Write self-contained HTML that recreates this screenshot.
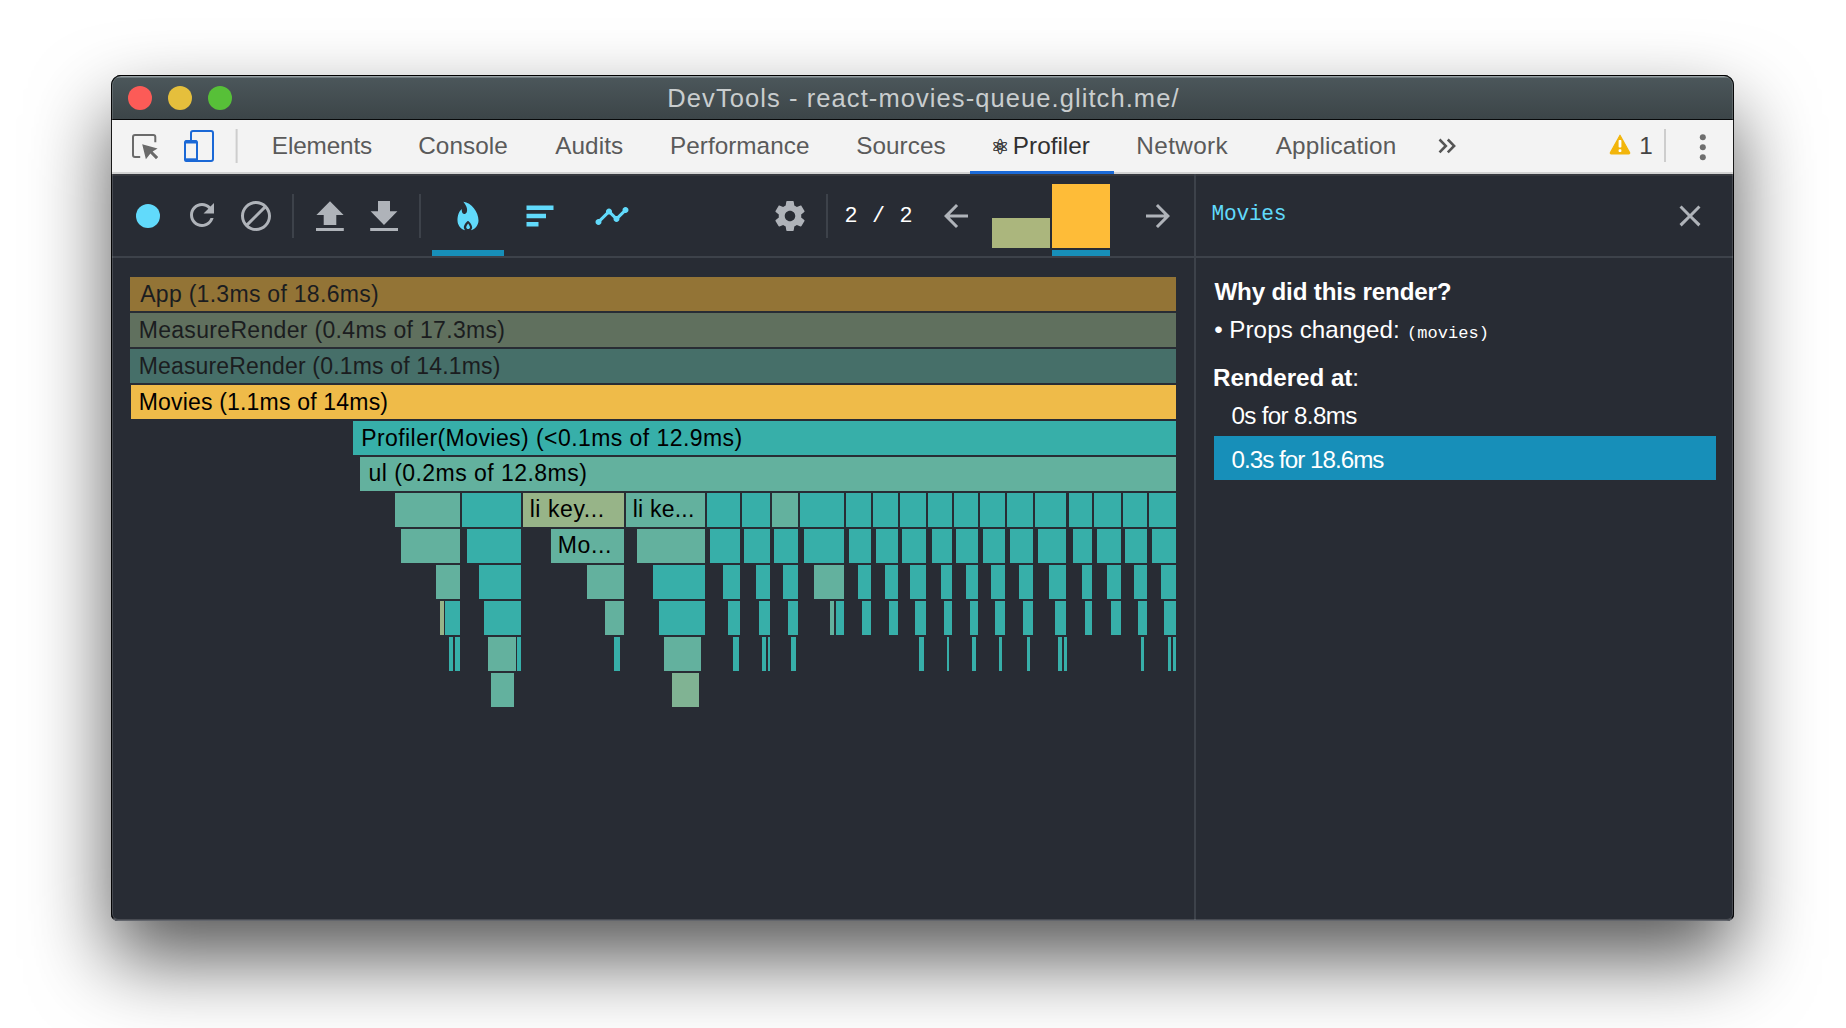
<!DOCTYPE html>
<html lang="en">
<head>
<meta charset="utf-8">
<title>DevTools - react-movies-queue.glitch.me/</title>
<style>
html,body{margin:0;padding:0;}
body{width:1846px;height:1028px;overflow:hidden;background:#fff;position:relative;font-family:"Liberation Sans",sans-serif;}
.abs{position:absolute;}
#win{position:absolute;left:111px;top:75px;width:1623px;height:846px;background:#282c34;border-radius:10px 10px 7px 7px;
 box-shadow:0 38px 80px 0 rgba(0,0,0,.66);}
#winclip{position:absolute;left:111px;top:75px;width:1623px;height:846px;border-radius:10px 10px 7px 7px;overflow:hidden;}
#title{position:absolute;left:0;top:0;width:1623px;height:44px;background:linear-gradient(#000 0,#000 1px,#919b9e 1px,#6d787c 2.6px,#4b565a 3.2px,#3c4548 44px);border-bottom:1px solid #07090a;}
.tl{position:absolute;top:10.8px;width:24.6px;height:24.6px;border-radius:50%;}
#tabs{position:absolute;left:0;top:45px;width:1623px;height:52px;background:#f3f3f3;border-bottom:2px solid #d2d2d2;}
#dark{position:absolute;left:0;top:99px;width:1623px;height:747px;background:#282c34;}
.vsep{position:absolute;width:2px;background:#3d424a;}
.fb{position:absolute;height:34px;}
.ic{position:absolute;width:36px;height:36px;fill:#afb3b9;}
.ic.on{fill:#61dafb;}
.mono{font-family:"Liberation Mono",monospace;}
.tx{position:absolute;white-space:pre;line-height:30px;}
.s{font-family:"Liberation Sans",sans-serif;}
.dj{font-family:"DejaVu Sans",sans-serif;}
</style>
</head>
<body>
<div id="win"></div>
<div id="winclip">
  <div id="title">
    <div class="tl" style="left:16.7px;background:#fc5b57;"></div>
    <div class="tl" style="left:56.7px;background:#e5bf3c;"></div>
    <div class="tl" style="left:96.6px;background:#57c038;"></div>
    
  </div>
  <div id="tabs">
    
    <svg class="abs" style="left:9px;top:4px;width:120px;height:44px;" viewBox="120 124 120 44">
      <path d="M155.3 142.3V137a2 2 0 0 0-2-2H135a2 2 0 0 0-2 2v18a2 2 0 0 0 2 2h5.2" fill="none" stroke="#6a6a6a" stroke-width="2"/>
      <path d="M142.2 144.2L157.6 148.6 152.6 151.4 158.2 157 156 159.2 150.4 153.6 145.9 159.2z" fill="#6a6a6a"/>
      <rect x="191" y="131" width="22" height="30" rx="2" fill="none" stroke="#1a68d6" stroke-width="2"/>
      <rect x="185" y="141" width="12" height="20" rx="1.5" fill="#f3f3f3" stroke="#1a68d6" stroke-width="2"/>
      <rect x="185" y="140.5" width="12" height="3" fill="#1a68d6"/>
      <rect x="185" y="158.3" width="12" height="3" fill="#1a68d6"/>
      <rect x="235.6" y="129" width="2" height="34" fill="#cdcdcd"/>
    </svg>
    <svg class="abs" style="left:1319px;top:10px;width:30px;height:30px;" viewBox="1430 130 30 30"><path d="M1439.5 139.5l6.3 6.4-6.3 6.4M1447.8 139.5l6.3 6.4-6.3 6.4" fill="none" stroke="#555" stroke-width="2.6"/></svg>
    <svg class="abs" style="left:1494px;top:10px;width:30px;height:30px;" viewBox="1605 130 30 30"><path d="M1620 135.2l9.6 17.3a1 1 0 0 1-.9 1.5h-17.4a1 1 0 0 1-.9-1.5z" fill="#f2b50b" stroke="#f2b50b" stroke-width="1.2" stroke-linejoin="round"/><rect x="1618.6" y="140" width="2.8" height="7.6" rx=".8" fill="#fff"/><rect x="1618.6" y="149.2" width="2.8" height="2.8" rx=".8" fill="#fff"/></svg>
    <div class="abs" style="left:1553px;top:9px;width:2px;height:33px;background:#cdcdcd;"></div>
    <svg class="abs" style="left:1582px;top:10px;width:20px;height:34px;" viewBox="1693 130 20 34"><circle cx="1702.8" cy="137.2" r="3" fill="#6e6e6e"/><circle cx="1702.8" cy="147.2" r="3" fill="#6e6e6e"/><circle cx="1702.8" cy="157.2" r="3" fill="#6e6e6e"/></svg>
    <div class="abs" style="left:858.5px;top:51px;width:144.5px;height:3px;background:#1b6ad8;"></div>
  </div>
  <div id="dark">
    <div class="abs" style="left:0;top:0;width:1623px;height:2px;background:#36383e;"></div>
    <div class="abs" style="left:0;top:82px;width:1623px;height:2px;background:#3d424a;"></div>
    <div class="vsep" style="left:1083px;top:0;height:747px;"></div>
    <div class="vsep" style="left:181px;top:20px;height:44px;"></div>
    <div class="vsep" style="left:308px;top:20px;height:44px;"></div>
    <div class="vsep" style="left:715px;top:20px;height:44px;"></div>
    <div class="abs" style="left:321px;top:76px;width:72px;height:6px;background:#178fb9;"></div>
    
    <div class="abs" style="left:25px;top:30px;width:24px;height:24px;border-radius:50%;background:#61dafb;"></div>
    <svg class="ic" style="left:73px;top:23px;" viewBox="0 0 24 24"><path d="M17.65 6.35C16.2 4.9 14.21 4 12 4c-4.42 0-7.99 3.58-7.99 8s3.57 8 7.99 8c3.73 0 6.84-2.55 7.73-6h-2.08c-.82 2.33-3.04 4-5.65 4-3.31 0-6-2.69-6-6s2.69-6 6-6c1.66 0 3.14.69 4.22 1.78L13 11h7V4l-2.35 2.35z"/></svg>
    <svg class="ic" style="left:127px;top:24px;" viewBox="0 0 24 24"><path d="M12 2C6.5 2 2 6.5 2 12s4.5 10 10 10 10-4.5 10-10S17.5 2 12 2zM4 12c0-4.4 3.6-8 8-8 1.8 0 3.5.6 4.9 1.7L5.7 16.9C4.6 15.5 4 13.8 4 12zm8 8c-1.8 0-3.5-.6-4.9-1.7L18.3 7.1C19.4 8.5 20 10.2 20 12c0 4.4-3.6 8-8 8z"/></svg>
    <svg class="abs" style="left:200px;top:22px;width:100px;height:40px;fill:#afb3b9;" viewBox="311 196 100 40"><path d="M330 201.2L343.6 215H336.3V225H323.7V215H316.4zM316 228h27.8v3H316z"/><path d="M378 201h12v10.2h7.4L384 225 370.6 211.2H378zM370.2 228H398v3H370.2z"/></svg>
    <svg class="ic on" style="left:339px;top:24px;" viewBox="0 0 24 24"><path fill-rule="evenodd" d="M10.0650893,21.5040462 C7.14020814,20.6850349 5,18.0558698 5,14.9390244 C5,14.017627 5,9.81707317 7.83333333,7.37804878 C7.83333333,7.37804878 7.58333333,11.199187 10,10.6300813 C11.125,10.326087 13.0062497,7.63043487 8.91666667,2.5 C14.1666667,3.06910569 19,9.32926829 19,14.9390244 C19,18.0558698 16.8597919,20.6850349 13.9349107,21.5040462 C14.454014,21.0118505 14.7765152,20.3233394 14.7765152,19.5613412 C14.7765152,17.2826087 12,15.0875871 12,15.0875871 C12,15.0875871 9.22348485,17.2826087 9.22348485,19.5613412 C9.22348485,20.3233394 9.54598603,21.0118505 10.0650893,21.5040462 Z M12.0833333,20.6514763 C11.3814715,20.6514763 10.8125,20.1226027 10.8125,19.4702042 C10.8125,18.6069669 12.0833333,16.9347829 12.0833333,16.9347829 C12.0833333,16.9347829 13.3541667,18.6069669 13.3541667,19.4702042 C13.3541667,20.1226027 12.7853285,20.6514763 12.0833333,20.6514763 Z"/></svg>
    <svg class="ic on" style="left:410.5px;top:24px;" viewBox="0 0 24 24"><path d="M3 5h18v3H3zM3 10.5h13v3H3zM3 16h8v3H3z"/></svg>
    <svg class="ic on" style="left:482.5px;top:23.5px;" viewBox="0 0 24 24"><path d="M23 8c0 1.1-.9 2-2 2-.18 0-.35-.02-.51-.07l-3.56 3.55c.05.16.07.34.07.52 0 1.1-.9 2-2 2s-2-.9-2-2c0-.18.02-.36.07-.52l-2.55-2.55c-.16.05-.34.07-.52.07s-.36-.02-.52-.07l-4.55 4.56c.05.16.07.33.07.51 0 1.1-.9 2-2 2s-2-.9-2-2 .9-2 2-2c.18 0 .35.02.51.07l4.56-4.55C8.02 9.36 8 9.18 8 9c0-1.1.9-2 2-2s2 .9 2 2c0 .18-.02.36-.07.52l2.55 2.55c.16-.05.34-.07.52-.07s.36.02.52.07l3.55-3.56C19.02 8.35 19 8.18 19 8c0-1.1.9-2 2-2s2 .9 2 2z"/></svg>
    <svg class="ic" style="left:661px;top:24px;" viewBox="0 0 24 24"><path d="M19.43 12.98c.04-.32.07-.64.07-.98s-.03-.66-.07-.98l2.11-1.65c.19-.15.24-.42.12-.64l-2-3.46c-.12-.22-.39-.3-.61-.22l-2.49 1c-.52-.4-1.08-.73-1.69-.98l-.38-2.65C14.46 2.18 14.25 2 14 2h-4c-.25 0-.46.18-.49.42l-.38 2.65c-.61.25-1.17.59-1.69.98l-2.49-1c-.23-.09-.49 0-.61.22l-2 3.46c-.13.22-.07.49.12.64l2.11 1.65c-.04.32-.07.65-.07.98s.03.66.07.98l-2.11 1.65c-.19.15-.24.42-.12.64l2 3.46c.12.22.39.3.61.22l2.49-1c.52.4 1.08.73 1.69.98l.38 2.65c.03.24.24.42.49.42h4c.25 0 .46-.18.49-.42l.38-2.65c.61-.25 1.17-.59 1.69-.98l2.49 1c.23.09.49 0 .61-.22l2-3.46c.12-.22.07-.49-.12-.64l-2.11-1.65zM12 15.5c-1.93 0-3.5-1.57-3.5-3.5s1.57-3.5 3.5-3.5 3.5 1.57 3.5 3.5-1.57 3.5-3.5 3.5z"/></svg>
    <svg class="ic" style="left:827px;top:24px;" viewBox="0 0 24 24"><path d="M20 11H7.83l5.59-5.59L12 4l-8 8 8 8 1.41-1.41L7.83 13H20v-2z"/></svg>
    <svg class="ic" style="left:1028.5px;top:24px;" viewBox="0 0 24 24"><path d="M12 4l-1.41 1.41L16.17 11H4v2h12.17l-5.58 5.59L12 20l8-8z"/></svg>
    <svg class="ic" style="left:1561px;top:24px;" viewBox="0 0 24 24"><path d="M19 6.41L17.59 5 12 10.59 6.41 5 5 6.41 10.59 12 5 17.41 6.41 19 12 13.41 17.59 19 19 17.41 13.41 12z"/></svg>
    <div class="abs" style="left:881px;top:44px;width:58px;height:30px;background:#abb67d;"></div>
    <div class="abs" style="left:941px;top:10px;width:58px;height:64px;background:#febc38;"></div>
    <div class="abs" style="left:941px;top:76px;width:58px;height:6px;background:#178fb9;"></div>
  </div>
</div>
<div class="abs" style="left:111px;top:75px;width:1623px;height:846px;border-radius:10px 10px 7px 7px;box-sizing:border-box;border:1px solid rgba(0,0,0,.9);border-bottom-color:#62656c;box-shadow:inset 0 0 0 1px rgba(255,255,255,.15);pointer-events:none;"></div>
<div id="flame" class="abs" style="left:0;top:0;">
<div class="fb" style="left:130px;top:277px;width:1045.5px;background:#febc38;opacity:.5;"></div>
<div class="fb" style="left:130px;top:313px;width:1045.5px;background:#97b488;opacity:.5;"></div>
<div class="fb" style="left:130px;top:349px;width:1045.5px;background:#63b19e;opacity:.5;"></div>
<div class="fb" style="left:131px;top:385px;width:1044.5px;background:#efbb49;"></div>
<div class="fb" style="left:353px;top:421px;width:822.5px;background:#37afa9;"></div>
<div class="fb" style="left:360px;top:457px;width:815.5px;background:#63b19e;"></div>
<div class="fb" style="left:395px;top:493px;width:65px;background:#63b19e;"></div>
<div class="fb" style="left:462px;top:493px;width:59px;background:#37afa9;"></div>
<div class="fb" style="left:523px;top:493px;width:101px;background:#97b488;"></div>
<div class="fb" style="left:626px;top:493px;width:79px;background:#63b19e;"></div>
<div class="fb" style="left:707px;top:493px;width:33px;background:#37afa9;"></div>
<div class="fb" style="left:742px;top:493px;width:28px;background:#37afa9;"></div>
<div class="fb" style="left:772px;top:493px;width:26px;background:#63b19e;"></div>
<div class="fb" style="left:800px;top:493px;width:44px;background:#37afa9;"></div>
<div class="fb" style="left:846px;top:493px;width:25px;background:#37afa9;"></div>
<div class="fb" style="left:873px;top:493px;width:24.5px;background:#37afa9;"></div>
<div class="fb" style="left:899.5px;top:493px;width:26.5px;background:#37afa9;"></div>
<div class="fb" style="left:928px;top:493px;width:24px;background:#37afa9;"></div>
<div class="fb" style="left:954px;top:493px;width:24px;background:#37afa9;"></div>
<div class="fb" style="left:980px;top:493px;width:24.5px;background:#37afa9;"></div>
<div class="fb" style="left:1006.5px;top:493px;width:26.0px;background:#37afa9;"></div>
<div class="fb" style="left:1034.5px;top:493px;width:31.5px;background:#37afa9;"></div>
<div class="fb" style="left:1068.5px;top:493px;width:23.5px;background:#37afa9;"></div>
<div class="fb" style="left:1094px;top:493px;width:26.5px;background:#37afa9;"></div>
<div class="fb" style="left:1122.5px;top:493px;width:24.5px;background:#37afa9;"></div>
<div class="fb" style="left:1149px;top:493px;width:26.5px;background:#37afa9;"></div>
<div class="fb" style="left:401px;top:529px;width:59px;background:#63b19e;"></div>
<div class="fb" style="left:467px;top:529px;width:54px;background:#37afa9;"></div>
<div class="fb" style="left:550.5px;top:529px;width:73.5px;background:#63b19e;"></div>
<div class="fb" style="left:637px;top:529px;width:68px;background:#63b19e;"></div>
<div class="fb" style="left:709.5px;top:529px;width:30.5px;background:#37afa9;"></div>
<div class="fb" style="left:744px;top:529px;width:26px;background:#37afa9;"></div>
<div class="fb" style="left:774px;top:529px;width:24px;background:#37afa9;"></div>
<div class="fb" style="left:804px;top:529px;width:40px;background:#37afa9;"></div>
<div class="fb" style="left:849px;top:529px;width:22px;background:#37afa9;"></div>
<div class="fb" style="left:875.5px;top:529px;width:22.0px;background:#37afa9;"></div>
<div class="fb" style="left:901.5px;top:529px;width:24.5px;background:#37afa9;"></div>
<div class="fb" style="left:931.5px;top:529px;width:20.5px;background:#37afa9;"></div>
<div class="fb" style="left:956px;top:529px;width:22px;background:#37afa9;"></div>
<div class="fb" style="left:983px;top:529px;width:21.5px;background:#37afa9;"></div>
<div class="fb" style="left:1009.5px;top:529px;width:23.0px;background:#37afa9;"></div>
<div class="fb" style="left:1037.5px;top:529px;width:28.5px;background:#37afa9;"></div>
<div class="fb" style="left:1072.5px;top:529px;width:19.5px;background:#37afa9;"></div>
<div class="fb" style="left:1097px;top:529px;width:23.5px;background:#37afa9;"></div>
<div class="fb" style="left:1124.5px;top:529px;width:22.5px;background:#37afa9;"></div>
<div class="fb" style="left:1151.5px;top:529px;width:24.0px;background:#37afa9;"></div>
<div class="fb" style="left:436px;top:565px;width:24px;background:#63b19e;"></div>
<div class="fb" style="left:479px;top:565px;width:42px;background:#37afa9;"></div>
<div class="fb" style="left:587px;top:565px;width:37px;background:#63b19e;"></div>
<div class="fb" style="left:653px;top:565px;width:52px;background:#37afa9;"></div>
<div class="fb" style="left:723px;top:565px;width:17px;background:#37afa9;"></div>
<div class="fb" style="left:755.5px;top:565px;width:14.5px;background:#37afa9;"></div>
<div class="fb" style="left:783px;top:565px;width:15px;background:#37afa9;"></div>
<div class="fb" style="left:814px;top:565px;width:30px;background:#63b19e;"></div>
<div class="fb" style="left:858px;top:565px;width:13px;background:#37afa9;"></div>
<div class="fb" style="left:885px;top:565px;width:12.5px;background:#37afa9;"></div>
<div class="fb" style="left:909.5px;top:565px;width:16.5px;background:#37afa9;"></div>
<div class="fb" style="left:940.5px;top:565px;width:11.5px;background:#37afa9;"></div>
<div class="fb" style="left:965.5px;top:565px;width:12.5px;background:#37afa9;"></div>
<div class="fb" style="left:991px;top:565px;width:13.5px;background:#37afa9;"></div>
<div class="fb" style="left:1019px;top:565px;width:13.5px;background:#37afa9;"></div>
<div class="fb" style="left:1049px;top:565px;width:17px;background:#37afa9;"></div>
<div class="fb" style="left:1081.5px;top:565px;width:10.5px;background:#37afa9;"></div>
<div class="fb" style="left:1106.5px;top:565px;width:14.0px;background:#37afa9;"></div>
<div class="fb" style="left:1134px;top:565px;width:13px;background:#37afa9;"></div>
<div class="fb" style="left:1161px;top:565px;width:14.5px;background:#37afa9;"></div>
<div class="fb" style="left:440px;top:601px;width:3.5px;background:#97b488;"></div>
<div class="fb" style="left:445px;top:601px;width:15px;background:#37afa9;"></div>
<div class="fb" style="left:484px;top:601px;width:37px;background:#37afa9;"></div>
<div class="fb" style="left:605px;top:601px;width:19px;background:#63b19e;"></div>
<div class="fb" style="left:659px;top:601px;width:46px;background:#37afa9;"></div>
<div class="fb" style="left:728px;top:601px;width:12px;background:#37afa9;"></div>
<div class="fb" style="left:759px;top:601px;width:11px;background:#37afa9;"></div>
<div class="fb" style="left:788px;top:601px;width:10px;background:#37afa9;"></div>
<div class="fb" style="left:829.5px;top:601px;width:4.5px;background:#63b19e;"></div>
<div class="fb" style="left:835.5px;top:601px;width:8.5px;background:#37afa9;"></div>
<div class="fb" style="left:862px;top:601px;width:9px;background:#37afa9;"></div>
<div class="fb" style="left:888.5px;top:601px;width:9.0px;background:#37afa9;"></div>
<div class="fb" style="left:914.5px;top:601px;width:11.5px;background:#37afa9;"></div>
<div class="fb" style="left:944px;top:601px;width:8px;background:#37afa9;"></div>
<div class="fb" style="left:969.5px;top:601px;width:8.5px;background:#37afa9;"></div>
<div class="fb" style="left:995px;top:601px;width:9.5px;background:#37afa9;"></div>
<div class="fb" style="left:1023px;top:601px;width:9.5px;background:#37afa9;"></div>
<div class="fb" style="left:1055px;top:601px;width:11px;background:#37afa9;"></div>
<div class="fb" style="left:1084.5px;top:601px;width:7.5px;background:#37afa9;"></div>
<div class="fb" style="left:1111px;top:601px;width:9.5px;background:#37afa9;"></div>
<div class="fb" style="left:1138px;top:601px;width:9px;background:#37afa9;"></div>
<div class="fb" style="left:1164px;top:601px;width:11.5px;background:#37afa9;"></div>
<div class="fb" style="left:449px;top:637px;width:3.5px;background:#37afa9;"></div>
<div class="fb" style="left:454.5px;top:637px;width:5.5px;background:#37afa9;"></div>
<div class="fb" style="left:488px;top:637px;width:27.5px;background:#63b19e;"></div>
<div class="fb" style="left:517px;top:637px;width:4px;background:#37afa9;"></div>
<div class="fb" style="left:614px;top:637px;width:6px;background:#37afa9;"></div>
<div class="fb" style="left:664px;top:637px;width:37px;background:#63b19e;"></div>
<div class="fb" style="left:733px;top:637px;width:5.5px;background:#37afa9;"></div>
<div class="fb" style="left:762px;top:637px;width:4px;background:#37afa9;"></div>
<div class="fb" style="left:767.5px;top:637px;width:2.5px;background:#37afa9;"></div>
<div class="fb" style="left:791px;top:637px;width:4.5px;background:#37afa9;"></div>
<div class="fb" style="left:919px;top:637px;width:4.5px;background:#37afa9;"></div>
<div class="fb" style="left:946.5px;top:637px;width:2.5px;background:#37afa9;"></div>
<div class="fb" style="left:971.5px;top:637px;width:4.0px;background:#37afa9;"></div>
<div class="fb" style="left:998.5px;top:637px;width:3.5px;background:#37afa9;"></div>
<div class="fb" style="left:1027px;top:637px;width:3px;background:#37afa9;"></div>
<div class="fb" style="left:1058px;top:637px;width:4px;background:#37afa9;"></div>
<div class="fb" style="left:1064px;top:637px;width:2.5px;background:#37afa9;"></div>
<div class="fb" style="left:1141px;top:637px;width:3px;background:#37afa9;"></div>
<div class="fb" style="left:1167.5px;top:637px;width:3.5px;background:#37afa9;"></div>
<div class="fb" style="left:1173px;top:637px;width:2.5px;background:#37afa9;"></div>
<div class="fb" style="left:491px;top:673px;width:22.5px;background:#63b19e;"></div>
<div class="fb" style="left:672px;top:673px;width:27px;background:#80b393;"></div>
</div>
<div id="side" class="abs" style="left:0;top:0;">
  <div class="abs" style="left:1214px;top:436px;width:502px;height:44px;background:#178fb9;"></div>
</div>
<div id="texts" class="abs" style="left:0;top:0;">
<div class="tx s" style="left:667.31px;top:83.3px;font-size:25.5px;letter-spacing:1.08px;color:#c9cdce;">DevTools - react-movies-queue.glitch.me/</div>
<div class="tx s" style="left:271.87px;top:130.6px;font-size:24.3px;letter-spacing:-0.131px;color:#5a5a5a;">Elements</div>
<div class="tx s" style="left:418.18px;top:130.6px;font-size:24.3px;letter-spacing:0.087px;color:#5a5a5a;">Console</div>
<div class="tx s" style="left:555.18px;top:130.6px;font-size:24.3px;letter-spacing:0.107px;color:#5a5a5a;">Audits</div>
<div class="tx s" style="left:669.97px;top:130.6px;font-size:24.3px;letter-spacing:0.034px;color:#5a5a5a;">Performance</div>
<div class="tx s" style="left:856.19px;top:130.6px;font-size:24.3px;letter-spacing:0.046px;color:#5a5a5a;">Sources</div>
<div class="tx s" style="left:1136.37px;top:130.6px;font-size:24.3px;letter-spacing:0.369px;color:#5a5a5a;">Network</div>
<div class="tx s" style="left:1275.68px;top:130.6px;font-size:24.3px;letter-spacing:0.17px;color:#5a5a5a;">Application</div>
<div class="tx s" style="left:1012.87px;top:130.6px;font-size:24.3px;letter-spacing:0.002px;color:#303030;">Profiler</div>
<div class="tx s" style="left:1639.2px;top:130.9px;font-size:24.3px;letter-spacing:0px;color:#444;">1</div>
<div class="tx dj" style="left:990.98px;top:131.7px;font-size:20.5px;letter-spacing:0px;color:#3a3a3a;-webkit-text-stroke:0.5px #3a3a3a;">&#9883;</div>
<div class="tx s" style="left:140.18px;top:279.11px;font-size:23px;letter-spacing:0.289px;color:#1b1d20;">App (1.3ms of 18.6ms)</div>
<div class="tx s" style="left:138.67px;top:315.11px;font-size:23px;letter-spacing:0.323px;color:#1b1d20;">MeasureRender (0.4ms of 17.3ms)</div>
<div class="tx s" style="left:138.67px;top:351.11px;font-size:23px;letter-spacing:0.17px;color:#1b1d20;">MeasureRender (0.1ms of 14.1ms)</div>
<div class="tx s" style="left:138.67px;top:386.61px;font-size:23px;letter-spacing:0.187px;color:#000;">Movies (1.1ms of 14ms)</div>
<div class="tx s" style="left:361.17px;top:422.61px;font-size:23px;letter-spacing:0.435px;color:#000;">Profiler(Movies) (&lt;0.1ms of 12.9ms)</div>
<div class="tx s" style="left:368.47px;top:458.41px;font-size:23px;letter-spacing:0.458px;color:#000;">ul (0.2ms of 12.8ms)</div>
<div class="tx s" style="left:529.67px;top:494.31px;font-size:23px;letter-spacing:0.564px;color:#000;">li key...</div>
<div class="tx s" style="left:632.67px;top:494.31px;font-size:23px;letter-spacing:0.234px;color:#000;">li ke...</div>
<div class="tx s" style="left:557.67px;top:530.21px;font-size:23px;letter-spacing:0.661px;color:#000;">Mo...</div>
<div class="tx mono" style="left:844.53px;top:202.21px;font-size:21.8px;letter-spacing:0.665px;color:#fff;">2 / 2</div>
<div class="tx mono" style="left:1211.52px;top:199.02px;font-size:21.2px;letter-spacing:-0.256px;color:#61dafb;">Movies</div>
<div class="tx s" style="left:1214.45px;top:277px;font-size:24.2px;font-weight:bold;letter-spacing:-0.178px;color:#fff;">Why did this render?</div>
<div class="tx s" style="left:1214.17px;top:314.6px;font-size:24.2px;letter-spacing:0px;color:#fff;">&bull;</div>
<div class="tx s" style="left:1229.28px;top:314.6px;font-size:24.2px;letter-spacing:0.081px;color:#fff;">Props changed:</div>
<div class="tx mono" style="left:1407.07px;top:318.71px;font-size:17px;letter-spacing:0.028px;color:#fff;">(movies)</div>
<div class="tx s" style="left:1213.04px;top:363px;font-size:24.2px;font-weight:bold;letter-spacing:-0.045px;color:#fff;">Rendered at</div>
<div class="tx s" style="left:1352.31px;top:363px;font-size:24.2px;letter-spacing:0px;color:#fff;">:</div>
<div class="tx s" style="left:1231.38px;top:400.8px;font-size:24.2px;letter-spacing:-0.653px;color:#fff;">0s for 8.8ms</div>
<div class="tx s" style="left:1231.58px;top:444.8px;font-size:24.2px;letter-spacing:-0.987px;color:#fff;">0.3s for 18.6ms</div>
</div>
</body>
</html>
